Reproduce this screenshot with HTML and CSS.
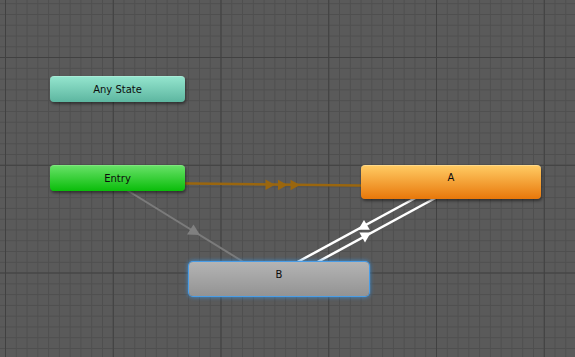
FILE: index.html
```html
<!DOCTYPE html>
<html lang="en">
<head>
<meta charset="UTF-8">
<title>Animator</title>
<link rel="stylesheet" href="styles.css">
</head>
<body>
<div class="graph">
    <!-- grid and transitions, drawn under the states -->
    <svg class="graph-lines" width="575" height="357" viewBox="0 0 575 357">
        <defs>
            <pattern id="minor" x="5" y="3.2" width="10.775" height="10.775" patternUnits="userSpaceOnUse">
                <path d="M0.5 0V10.775M0 0.5H10.775" stroke="#4f4f4f" stroke-width="1" fill="none"/>
            </pattern>
            <pattern id="major" x="5" y="57" width="107.75" height="107.75" patternUnits="userSpaceOnUse">
                <path d="M0.5 0V107.75M0 0.5H107.75" stroke="#414141" stroke-width="1" fill="none"/>
            </pattern>
        </defs>
        <rect width="575" height="357" fill="#5a5a5a"/>
        <rect width="575" height="357" fill="url(#minor)"/>
        <rect width="575" height="357" fill="url(#major)"/>

        <!-- Entry -> A (default) -->
        <line x1="150" y1="183" x2="400" y2="186" stroke="#9a660e" stroke-width="2.5"/>
        <polygon points="265.5,179.5 275,184.7 265.5,190" fill="#9a660e"/>
        <polygon points="278,179.7 287.5,184.9 278,190.2" fill="#9a660e"/>
        <polygon points="290.5,179.8 300,185 290.5,190.3" fill="#9a660e"/>

        <!-- Entry -> B -->
        <line x1="117" y1="184" x2="250" y2="266" stroke="#7b7b7b" stroke-width="2"/>
        <polygon points="193.5,224.5 187,234.5 200,235" fill="#808080"/>

        <!-- B <-> A -->
        <line x1="290.2" y1="266" x2="420.9" y2="195" stroke="#ffffff" stroke-width="2.5"/>
        <line x1="310.2" y1="266" x2="440.9" y2="195" stroke="#ffffff" stroke-width="2.5"/>
        <polygon points="364,220 358.2,229.8 369.8,229.8" fill="#ffffff"/>
        <polygon points="359.4,232.4 370.8,232.4 365,242.5" fill="#ffffff"/>
    </svg>

    <div class="node node-any">Any State</div>
    <div class="node node-entry">Entry</div>
    <div class="node node-state node-a">A</div>
    <div class="node node-state node-b selected">B</div>
</div>
</body>
</html>
```
FILE: styles.css
```css
body {
    margin: 0;
    padding: 0;
    background-color: #5a5a5a;
    font-family: 'DejaVu Sans', Verdana, sans-serif;
}
.graph {
    position: relative;
    width: 575px;
    height: 357px;
    overflow: hidden;
}
.graph-lines {
    position: absolute;
    left: 0;
    top: 0;
    display: block;
}
.node {
    position: absolute;
    box-sizing: border-box;
    border-radius: 4px;
    font-size: 10px;
    line-height: 25px;
    text-align: center;
    color: #0c0c0c;
    box-shadow: 1px 2px 3px rgba(0, 0, 0, 0.45);
}
.node-any {
    left: 50px;
    top: 76px;
    width: 135px;
    height: 26px;
    background: linear-gradient(#93e4cd, #5db6a0);
    border-top: 1px solid #a8ecd8;
}
.node-entry {
    left: 50px;
    top: 165px;
    width: 135px;
    height: 26px;
    background: linear-gradient(#66e166, #0abd0a);
    border-top: 1px solid #7ee87e;
}
.node-state {
    width: 180px;
    height: 34px;
}
.node-a {
    left: 361px;
    top: 165px;
    background: linear-gradient(#ffca62, #e8770a);
    border-top: 1px solid #ffd98a;
    line-height: 24px;
}
.node-b {
    left: 189px;
    top: 262px;
    background: linear-gradient(#b4b4b4, #939393);
    line-height: 26px;
}
.selected {
    box-shadow: 0 0 0 1px #4a9de6, 0 0 4px 1px #3b8fd8;
}
```
